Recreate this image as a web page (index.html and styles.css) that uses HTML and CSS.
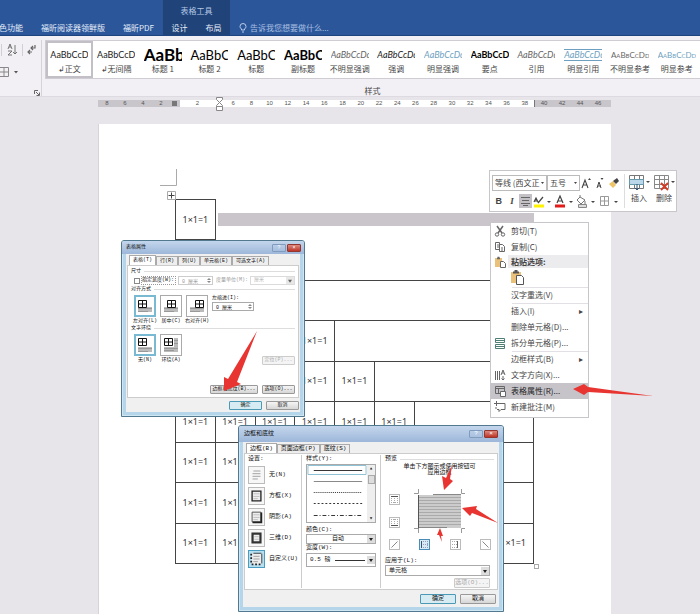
FILE: index.html
```html
<!DOCTYPE html>
<html lang="zh-CN">
<head>
<meta charset="utf-8">
<title>Word</title>
<link rel="stylesheet" href="styles.css">
</head>
<body>
<header class="titlebar">
  <nav class="tabs">
    <a href="#" class="first">色功能</a>
    <a href="#" class="reader">福昕阅读器领鲜版</a>
    <a href="#" class="pdf">福昕PDF</a>
  </nav>
  <div class="context-tabs">
    <span class="context-title">表格工具</span>
    <nav class="context-links"><a href="#">设计</a><a href="#">布局</a></nav>
  </div>
  <div class="tell-me">
    <svg width="8" height="10" viewBox="0 0 8 10" fill="none" stroke="#b9cbe8"><path d="M2.5 7V6Q1 5 1 3.5a3 3 0 0 1 6 0Q7 5 5.500 6v1zM3 9h2"/></svg>
    <span>告诉我您想要做什么...</span>
  </div>
</header>

<section class="ribbon">
  <div class="paragraph-tools">
    <div class="tool-row">
      <svg width="40" height="14" viewBox="0 0 40 14" fill="none" stroke="#666"><path d="M8 6l2-5 2 5M9 4h2M8 8h4l-4 4h4M15 2v9M13 9l2 2 2-2" stroke-width=".9"/><path d="M1.500 1v12M22.500 1v12" stroke="#d2ced6"/><path d="M35 2v3h-4M33 3l-2 2 2 2M28 9h4M30 7l-2 2 2 2" stroke-width="1.200"/></svg>
    </div>
    <div class="tool-row">
      <svg width="20" height="10" viewBox="0 0 20 10" fill="none" stroke="#888"><path d="M0 .5h8.500v9H0M0 5h8M4 0v9"/><path d="M14 4h4l-2 2.500z" fill="#555" stroke="none"/></svg>
    </div>
    <svg class="launcher" width="6" height="6" viewBox="0 0 6 6" fill="none" stroke="#666"><path d="M.5 4V.5H4M2 2l3 3M5.500 2.500v3h-3"/></svg>
  </div>
  <div class="styles-group">
    <div class="gallery">
      <button class="style selected"><span class="sample">AaBbCcDd</span><span>↲正文</span></button>
      <button class="style"><span class="sample">AaBbCcDd</span><span>↲无间隔</span></button>
      <button class="style"><span class="sample huge">AaBbC</span><span>标题 1</span></button>
      <button class="style"><span class="sample large">AaBbCc</span><span>标题 2</span></button>
      <button class="style"><span class="sample large">AaBbCc</span><span>标题</span></button>
      <button class="style"><span class="sample large strong">AaBbCc</span><span>副标题</span></button>
      <button class="style"><span class="sample italic muted">AaBbCcDd</span><span>不明显强调</span></button>
      <button class="style"><span class="sample italic">AaBbCcDd</span><span>强调</span></button>
      <button class="style"><span class="sample italic blue">AaBbCcDd</span><span>明显强调</span></button>
      <button class="style"><span class="sample strong">AaBbCcD</span><span>要点</span></button>
      <button class="style"><span class="sample italic muted">AaBbCcDd</span><span>引用</span></button>
      <button class="style"><span class="sample italic blue ruled">AaBbCcDd</span><span>明显引用</span></button>
      <button class="style"><span class="sample caps muted">AaBbCcDd</span><span>不明显参考</span></button>
      <button class="style"><span class="sample caps blue">AaBbCcDd</span><span>明显参考</span></button>
    </div>
    <div class="group-name">样式</div>
  </div>
</section>

<main class="workspace">
  <div class="ruler">
    <div class="outside left"><i>8</i><i>6</i><i>4</i><i>2</i><b></b></div>
    <div class="inside">
      <i class="wide">2</i>
      <svg class="indent" width="9" height="14" viewBox="0 0 9 14" fill="#fff" stroke="#888"><path d="M1.500.5h6v2l-3 3-3-3zM1.500 9.500v-1l3-3 3 3v1zM1.500 9.500h6v4h-6z"/></svg>
      <i>6</i><i>8</i><i>10</i><i>12</i><i>14</i><i>16</i><i>18</i><i>20</i><i>22</i><i>24</i><i>26</i><i>28</i><i>30</i><i>32</i><i>34</i><i>36</i><i>38</i>
    </div>
    <div class="outside right"><i>40</i><i>42</i><i>44</i><i>46</i></div>
  </div>

  <article class="page">
    <svg class="corner" width="18" height="31" viewBox="0 0 18 31" fill="none" stroke="#aaa"><path d="M0 16.500h16.500V0"/><path d="M7.500 22.500h8v8h-8z" fill="#fff"/><path d="M11.500 23.500v6M8.500 26.500h6" stroke="#444"/></svg>
    <table class="sheet">
      <colgroup><col><col><col><col><col><col><col><col><col></colgroup>
      <tr><td>1×1=1</td><td colspan="8" class="open"><div class="selection"></div></td></tr>
      <tr><td>1×1=1</td><td class="below-open">1×1=1</td><td colspan="7" class="below-open"></td></tr>
      <tr><td>1×1=1</td><td>1×1=1</td><td colspan="7"></td></tr>
      <tr><td>1×1=1</td><td>1×1=1</td><td>1×1=1</td><td>1×1=1</td><td colspan="5"></td></tr>
      <tr><td>1×1=1</td><td>1×1=1</td><td>1×1=1</td><td>1×1=1</td><td>1×1=1</td><td colspan="4"></td></tr>
      <tr><td>1×1=1</td><td>1×1=1</td><td>1×1=1</td><td>1×1=1</td><td>1×1=1</td><td>1×1=1</td><td colspan="3"></td></tr>
      <tr><td>1×1=1</td><td>1×1=1</td><td>1×1=1</td><td>1×1=1</td><td>1×1=1</td><td>1×1=1</td><td>1×1=1</td><td colspan="2"></td></tr>
      <tr><td>1×1=1</td><td>1×1=1</td><td>1×1=1</td><td>1×1=1</td><td>1×1=1</td><td>1×1=1</td><td>1×1=1</td><td colspan="2"></td></tr>
      <tr><td>1×1=1</td><td>1×1=1</td><td>1×1=1</td><td>1×1=1</td><td>1×1=1</td><td>1×1=1</td><td>1×1=1</td><td colspan="2" class="last">1×1=1</td></tr>
    </table>
    <div class="resize-handle"></div>

    <section class="dialog properties">
      <header><span>表格属性</span><button class="help">?</button><button class="close">×</button></header>
      <div class="body">
        <div class="dialog-tabs"><button class="active">表格(T)</button><button>行(R)</button><button>列(U)</button><button>单元格(E)</button><button>可选文字(A)</button></div>
        <div class="panel">
          <h3>尺寸</h3>
          <div class="size-row">
            <input type="checkbox" id="set-width"><label for="set-width" class="focus">指定宽度(W):</label>
            <input type="text" value="0 厘米" disabled aria-label="宽度" class="amount">
            <label for="unit" class="off">度量单位(M):</label>
            <select id="unit" disabled><option>厘米</option></select>
          </div>
          <h3>对齐方式</h3>
          <div class="choice-row">
            <button class="choice"><span class="tile on"><svg width="16" height="16" viewBox="0 0 16 16"><path d="M1 9h14v5H1z" fill="#bbb"/><path d="M1 10.500h14M1 13.500h10" stroke="#999"/><path d="M1.500 2.500h8v7h-8zM5.500 2v8M1 6h9" fill="#fff" stroke="#111"/></svg></span>左对齐(L)</button>
            <button class="choice"><span class="tile"><svg width="16" height="16" viewBox="0 0 16 16"><path d="M1 9h14v5H1z" fill="#bbb"/><path d="M1 10.500h14M1 13.500h10" stroke="#999"/><path d="M4.500 2.500h8v7h-8zM8.500 2v8M4 6h9" fill="#fff" stroke="#111"/></svg></span>居中(C)</button>
            <button class="choice"><span class="tile"><svg width="16" height="16" viewBox="0 0 16 16"><path d="M1 9h14v5H1z" fill="#bbb"/><path d="M1 10.500h14M1 13.500h10" stroke="#999"/><path d="M6.500 2.500h8v7h-8zM10.500 2v8M6 6h9" fill="#fff" stroke="#111"/></svg></span>右对齐(H)</button>
            <div class="indent-field"><label for="left-indent">左缩进(I):</label><input id="left-indent" type="text" value="0 厘米" class="amount"></div>
          </div>
          <h3>文字环绕</h3>
          <div class="choice-row">
            <button class="choice"><span class="tile on"><svg width="16" height="16" viewBox="0 0 16 16"><path d="M1 10h14v5H1z" fill="#bbb"/><path d="M1 11.500h14M1 14.500h10" stroke="#999"/><path d="M1.500 1.500h8v7h-8zM5.500 1v8M1 5h9" fill="#fff" stroke="#111"/></svg></span>无(N)</button>
            <button class="choice"><span class="tile"><svg width="16" height="16" viewBox="0 0 16 16"><path d="M11 1h4v14H1v-5h10z" fill="#bbb"/><path d="M1 11.500h14M1 13.500h10M11 3.500h4M11 6.500h4" stroke="#999"/><path d="M1.500 1.500h8v7h-8zM5.500 1v8M1 5h9" fill="#fff" stroke="#111"/></svg></span>环绕(A)</button>
            <button class="push" disabled>定位(P)...</button>
          </div>
          <div class="panel-actions"><button class="push broad">边框和底纹(B)...</button><button class="push">选项(O)...</button></div>
        </div>
        <footer><button class="push default">确定</button><button class="push">取消</button></footer>
      </div>
    </section>

    <section class="dialog borders">
      <header><span>边框和底纹</span><button class="help">?</button><button class="close">×</button></header>
      <div class="body">
        <div class="dialog-tabs"><button class="active">边框(B)</button><button>页面边框(P)</button><button>底纹(S)</button></div>
        <div class="panel columns">
          <div class="settings">
            <p>设置:</p>
            <button><svg width="17" height="18" viewBox="0 0 17 18"><path d="M5 4.500h8M4 7.500h9M4 10.500h9M4 13.500h6" stroke="#999"/></svg>无(N)</button>
            <button><svg width="17" height="18" viewBox="0 0 17 18"><path d="M3.500 3.500h10v11h-10z" fill="#eee" stroke="#222" stroke-width="1.500"/><path d="M5 6.500h7M5 9.500h7M5 12h5" stroke="#bbb"/></svg>方框(X)</button>
            <button><svg width="17" height="18" viewBox="0 0 17 18"><path d="M3.500 3.500h10v11h-10z" fill="#eee" stroke="#444"/><path d="M14 4v11H4" fill="none" stroke="#222" stroke-width="2"/><path d="M5 6.500h7M5 9.500h7M5 12h5" stroke="#bbb"/></svg>阴影(A)</button>
            <button><svg width="17" height="18" viewBox="0 0 17 18"><path d="M4 4h9v10H4z" fill="#eee" stroke="#333" stroke-width="2.500"/><path d="M6 7.500h5M6 10.500h5" stroke="#bbb"/></svg>三维(D)</button>
            <button><svg class="on" width="17" height="18" viewBox="0 0 17 18"><path d="M3 3h11v12H3z" fill="#eee"/><path d="M2.500 3v11M3 15h12" stroke="#222" stroke-width="2" stroke-dasharray="2"/><path d="M5 2.500h9M14.500 3v11" stroke="#333"/><path d="M5 6h7M5 9h7M5 12h5" stroke="#999"/></svg>自定义(U)</button>
          </div>
          <div class="line-options">
            <p>样式(Y):</p>
            <div class="line-list">
              <svg viewBox="0 0 62 57" preserveAspectRatio="none" fill="none" stroke="#333"><path d="M1 .5h60v9H1z" stroke="#8dc1d4"/><path d="M7 5.500h50"/><path d="M7 16.500h50" stroke="#888"/><path d="M7 27.500h50" stroke-dasharray="1"/><path d="M7 38.500h50" stroke-dasharray="2"/><path d="M7 50.500h50" stroke-dasharray="4 2 1 2"/></svg>
              <div class="scroll"><span>▴</span><em></em><span>▾</span></div>
            </div>
            <label for="color">颜色(C):</label>
            <select id="color" class="centered"><option>自动</option></select>
            <label for="width">宽度(W):</label>
            <div class="weight"><select id="width"><option>0.5 磅</option></select></div>
          </div>
          <div class="preview">
            <h3>预览</h3>
            <p class="hint">单击下方图示或使用按钮可<br>应用边框</p>
            <div class="preview-grid">
              <div class="side"><button class="edge" aria-label="上边框"><svg width="9" height="9" viewBox="0 0 9 9"><path d="M1 1.500h7" stroke="#555"/><path d="M1.500 3v5M7.500 3v5M4.500 3v5M1 7.500h7" stroke="#aaa" stroke-dasharray="1"/></svg></button><button class="edge" aria-label="下边框"><svg width="9" height="9" viewBox="0 0 9 9"><path d="M1 7.500h7" stroke="#555"/><path d="M1.500 1v5M7.500 1v5M4.500 1v5M1 1.500h7" stroke="#aaa" stroke-dasharray="1"/></svg></button></div>
              <svg class="sample-page" width="52" height="46" viewBox="0 0 52 46" fill="none"><path d="M6 6h42v33H6z" fill="#ccc"/><path d="M6 8.500h42M6 11.500h42M6 14.500h42M6 17.500h42M6 20.500h42M6 23.500h42M6 26.500h42M6 29.500h42M6 32.500h42M6 35.500h42" stroke="#aaa"/><path d="M5.500 6v34" stroke="#555"/><path d="M20 5.500h28M6 38.500h28" stroke="#888"/><path d="M1 4.500h4.500V0M53 4.500h-4.500V0M1 39.500h4.500V44M53 39.500h-4.500V44" stroke="#999"/></svg>
            </div>
            <div class="edges"><button class="edge" aria-label="斜线"><svg width="9" height="9" viewBox="0 0 9 9"><path d="M1.500 7.500l6-6" stroke="#888"/></svg></button><button class="edge on" aria-label="左边框"><svg width="9" height="9" viewBox="0 0 9 9"><path d="M1.500 1v7" stroke="#357"/><path d="M3 1.500h5M3 4.500h5M3 7.500h5M7.500 1v7" stroke="#99b" stroke-dasharray="1"/></svg></button><button class="edge" aria-label="右边框"><svg width="9" height="9" viewBox="0 0 9 9"><path d="M6.500 1v7" stroke="#666"/><path d="M1 1.500h5M1 4.500h5M1 7.500h5" stroke="#aaa" stroke-dasharray="1"/></svg></button><button class="edge" aria-label="反斜线"><svg width="9" height="9" viewBox="0 0 9 9"><path d="M1.500 1.500l6 6" stroke="#888"/></svg></button></div>
            <label for="apply">应用于(L):</label>
            <select id="apply"><option>单元格</option></select>
            <button class="push" disabled>选项(O)...</button>
          </div>
        </div>
        <footer><button class="push default">确定</button><button class="push">取消</button></footer>
      </div>
    </section>

    <div class="mini-toolbar">
      <div class="mini-main">
        <div class="mini-row">
          <select aria-label="字体" class="font-name"><option>等线 (西文正</option></select><select aria-label="字号" class="font-size"><option>五号</option></select>
          <svg width="42" height="14" viewBox="0 0 42 14" fill="none" stroke="#444"><path d="M2 12l3-8 3 8M3 9h4" stroke-width="1.100"/><path d="M8 4l1.500-2L11 4z" fill="#444" stroke="none"/><path d="M17 12l2-6 2 6M18 10h3"/><path d="M20.500 2h3L22 4z" fill="#444" stroke="none"/><path d="M29 8l4-3 3 4-3 3z" fill="#efc568" stroke="none"/><path d="M33 5l4-3 2 3-3 3z" fill="#444" stroke="none"/></svg>
        </div>
        <div class="mini-row">
          <button class="glyph bold">B</button><button class="glyph italic">I</button>
          <button class="glyph pressed" aria-label="居中"><svg width="13" height="14" viewBox="0 0 13 14" stroke="#666"><path d="M2 3.500h9M3 6.500h7M2 9.500h9M4 11.500h5"/></svg></button>
          <svg width="92" height="14" viewBox="0 0 92 14" fill="none" stroke="#444"><path d="M2 10.500h10v3H2z" fill="#fff200" stroke="none"/><path d="M2 8l2-4 2 4M3 7h2M6 9l5-6" stroke-width="1.200"/><path d="M25 9l3-7 3 7M26 7h4" stroke-width="1.200"/><path d="M23 10.500h10v3H23z" fill="#e21b1b" stroke="none"/><path d="M48 3l5 3-4 4-4-4zM48 3V1M53 7v3" stroke="#777"/><path d="M46.500 10.500h8v3h-8z" fill="#ddd" stroke="#888"/><path d="M68.500 2.500h8v9h-8zM72.500 2v10M68 7h9" stroke="#999"/><path d="M15 7h4l-2 2zM37 7h4l-2 2zM59 7h4l-2 2zM82 7h4l-2 2z" fill="#444" stroke="none"/></svg>
        </div>
      </div>
      <button class="big"><svg width="22" height="18" viewBox="0 0 22 18" fill="none" stroke="#777"><path d="M1.500 1.500h14v13h-14zM6.500 1v5M11.500 1v5M6.500 11v4M11.500 11v4"/><path d="M1.500 5.500h14v5h-14z" fill="#bcd6ea" stroke="#69a"/><path d="M9 10v6M7 14l2 2 2-2" stroke="#357"/><path d="M18 7h4l-2 2z" fill="#444" stroke="none"/></svg>插入</button>
      <button class="big"><svg width="22" height="18" viewBox="0 0 22 18" fill="none" stroke="#888"><path d="M1.500 1.500h14v13h-14zM6.500 1v14M11.500 1v14M1 5.500h15M1 10.500h15"/><path d="M8 9l7 7M15 9l-7 7" stroke="#d33d25" stroke-width="1.800"/><path d="M18 7h4l-2 2z" fill="#444" stroke="none"/></svg>删除</button>
    </div>

    <div class="menu">
      <button><svg viewBox="0 0 12 12"><path d="M3 1l5 7M9 1L4 8" stroke-width="1.500"/><circle cx="3" cy="9.500" r="1.700"/><circle cx="9" cy="9.500" r="1.700"/></svg>剪切(T)</button>
      <button><svg viewBox="0 0 12 12"><path d="M1.500 1.500h4v7h-4zM3 4h2M3 6h2"/><path d="M5.500 3.500h3l2 2v5h-5zM7 7h2M7 9h2" fill="#fff"/></svg>复制(C)</button>
      <div class="menu-heading"><svg viewBox="0 0 12 12"><path d="M1 2h7v9H1z" fill="#e9c17a" stroke="none"/><path d="M3 2.500h3M3.500 1.500h2" stroke-width="1.500"/><path d="M6.500 5.500h3l2 2v4h-5z" fill="#fff"/></svg><b>粘贴选项:</b></div>
      <div class="paste-row"><button aria-label="保留源格式"><svg class="paste" width="15" height="17" viewBox="0 0 15 17" fill="none" stroke="#555"><path d="M1 3h10v11H1z" fill="#e9c17a" stroke="none"/><path d="M3 3.500h6M4.500 2h3" stroke-width="2"/><path d="M6.500 6.500h5l2 2v7h-7z" fill="#fff"/></svg></button></div>
      <button class="ruled-top"><svg></svg>汉字重选(V)</button>
      <button class="ruled-top"><svg></svg>插入(I)<em>▸</em></button>
      <button><svg></svg>删除单元格(D)...</button>
      <button><svg viewBox="0 0 12 12" class="green"><path d="M1.500 1.500h9v4h-9zM1.500 7.500h9v4h-9zM1.500 3.500h9M1.500 9.500h9"/></svg>拆分单元格(P)...</button>
      <button class="ruled-top"><svg></svg>边框样式(B)<em>▸</em></button>
      <button><svg viewBox="0 0 12 12"><path d="M1.500 2v9M3.500 2v9M5.500 2v9M7 6l2-5 2 5M8 4h2M9 7v4M7.500 9.500L9 11l1.500-1.500"/></svg>文字方向(X)...</button>
      <button class="highlight"><svg viewBox="0 0 12 12"><path d="M1.500 1.500h9v7h-9zM1 3.500h10M4.500 4v5"/><path d="M6.500 6.500h5v5h-5z" fill="#fff"/></svg>表格属性(R)...</button>
      <button><svg viewBox="0 0 12 12"><path d="M4 2.500h7v6H7l-2 2v-2H3M2.500 0v5M0 2.500h5M2 6v2"/></svg>新建批注(M)</button>
    </div>

    <svg class="arrows" width="602" height="490" viewBox="98 124 602 490" fill="#e83531">
      <path d="M257 331L237 382L241 384L224 391L224 377L228 379Z"/>
      <path d="M653 396L588 392L584 395L573 389L584 384L588 387Z"/>
      <path d="M452 465L450 479L453 481L444 490L442 476L446 478Z"/>
      <path d="M498 523L472 513L470 516L462 508L477 506L476 509Z"/>
      <path d="M442 542L441 536L443 536L440 528L437 535L439 535Z"/>
    </svg>
  </article>
</main>
</body>
</html>
```
FILE: styles.css
```css
* { box-sizing: border-box; }
body {
  margin: 0;
  height: 100vh;
  display: flex;
  flex-direction: column;
  overflow: hidden;
  background: #e7e4ea;
  color: #444;
  font: 8px/10px "Noto Sans CJK SC", sans-serif;
}
button, input, select { font: inherit; color: inherit; margin: 0; padding: 0; border: 0; background: none; border-radius: 0; appearance: none; }
p, h3 { margin: 0; font-weight: 400; font-size: inherit; }
svg { flex: none; }
a { color: inherit; text-decoration: none; white-space: nowrap; }
i, em { font-style: normal; }

/* Title bar */
.titlebar { display: flex; height: 36px; background: #2b579a; color: #e8eefa; border-bottom: 1px solid #1e4480; flex: none; }
.tabs { display: flex; width: 163px; padding-top: 23px; gap: 18px; }
.tabs .first { margin-left: -1px; }
.context-tabs { width: 67px; background: #204379; padding-top: 6px; display: flex; flex-direction: column; gap: 7px; align-items: center; }
.context-title { color: #b5c7e6; }
.context-links { display: flex; gap: 18px; }
.tell-me { display: flex; gap: 3px; padding: 23px 0 0 9px; color: #a9bfe2; white-space: nowrap; }

/* Ribbon */
.ribbon { display: flex; height: 61px; flex: none; background: #f3f0f5; border-bottom: 1px solid #dedae1; padding-top: 4px; }
.paragraph-tools { width: 42px; border-right: 1px solid #d6d2da; display: flex; flex-direction: column; }
.tool-row { height: 24px; padding-top: 3px; }
.launcher { margin: 2px 0 0 34px; }
.styles-group { flex: 1; min-width: 0; padding-left: 3px; }
.gallery { display: grid; grid-template-columns: repeat(14, minmax(0, 1fr)); height: 39px; background: #fff; border: 1px solid #d0ccd4; border-right: 0; }
.style { display: flex; flex-direction: column; align-items: center; white-space: nowrap; padding: 3px 2px 0; border: 2px solid transparent; overflow: hidden; }
.style.selected { border-color: #c2bfc6; }
.sample { width: 38px; height: 18px; line-height: 18px; font-family: Lato, sans-serif; font-size: 9px; overflow: hidden; text-align: left; color: #222; flex: none; }
.sample.large { font-size: 13px; color: #000; }
.sample.huge { font-size: 17px; font-weight: 700; color: #000; }
.sample.strong { font-weight: 700; color: #000; }
.sample.italic { font-style: italic; }
.sample.muted { color: #666; }
.sample.blue { color: #6f9fc0; }
.sample.ruled { height: 12px; line-height: 10px; margin: 3px 0; border: solid #6f9fc0; border-width: 1px 0; }
.sample.caps { font-variant: small-caps; font-size: 8px; }
.group-name { text-align: center; padding: 7px 0 0; width: 655px; max-width: 100%; }

/* Ruler */
.workspace { flex: 1; min-height: 0; display: flex; flex-direction: column; padding: 3px 89px 0 98px; overflow: hidden; }
.ruler { display: flex; height: 24px; flex: none; font: 6px/7px "Liberation Sans", sans-serif; color: #555; text-align: center; }
.ruler > div { display: flex; height: 7px; }
.ruler i { flex: 1; min-width: 0; }
.ruler .outside { background: #c8c5cb; }
.ruler .outside i { flex: 0 0 18px; }
.ruler .left { width: 82px; }
.ruler .left b { width: 5px; height: 5px; margin: 1px 2px; background: #777; }
.ruler .right { width: 77px; border-left: 1px solid #777; }
.ruler .inside { flex: 1; background: #fff; }
.ruler .inside .wide { flex: 0 0 35px; }
.indent { margin-top: -3px; }

/* Page */
.page { position: relative; flex: 1; background: #fff; padding: 45px 77px 0 61px; border-left: 1px solid #d6d3d9; }
.corner { display: block; }
.sheet { width: calc(100% - 15px); height: 365px; margin: -1px 0 0 15px; border-collapse: collapse; table-layout: fixed; font: 9px/12px "Noto Sans", sans-serif; color: #333; }
.sheet td { border: 1px solid #444; padding: 0; text-align: center; }
.sheet .open { border: 0; border-left: 1px solid #444; }
.sheet .below-open { border-top: 0; }
.sheet .last { text-align: right; padding-right: 7px; }
.selection { height: 13px; margin-left: 2px; background: #c9c5cb; }
.resize-handle { width: 5px; height: 5px; border: 1px solid #aaa; margin-left: auto; margin-right: -5px; }
.arrows { position: absolute; left: -1px; top: 0; pointer-events: none; }

/* Dialogs */
.dialog { position: absolute; display: flex; flex-direction: column; padding: 0 4px 4px; color: #111; background: #b4d5ea; border: 1px solid #51798f; border-radius: 3px 3px 0 0; box-shadow: inset 0 0 0 1px #cfe6f3; white-space: nowrap; font-family: "Liberation Mono", "Noto Sans CJK SC", monospace; }
.properties { left: 22px; top: 116px; width: 184px; height: 177px; font-size: 5px; line-height: 7px; }
.borders { left: 139px; top: 301px; width: 266px; height: 187px; font-size: 6px; line-height: 8px; }
.dialog header { display: flex; align-items: center; height: 13px; margin: 0 -4px; padding: 0 3px 0 4px; gap: 1px; background: linear-gradient(#c4d6ec, #9db7da); border-radius: 2px 2px 0 0; flex: none; }
.borders header { height: 16px; padding: 0 5px; }
.dialog header span { flex: 1; }
.dialog header button { width: 14px; height: 8px; line-height: 6px; border: 1px solid #7f9bbd; border-radius: 1px; color: #fff; }
.dialog header .close { background: linear-gradient(#dc8a80, #bd3427); border-color: #94362f; }
.body { flex: 1; display: flex; flex-direction: column; background: #f0f0f0; padding: 1px 1px 0; min-height: 0; }
.dialog-tabs { display: flex; padding-left: 2px; height: 10px; flex: none; }
.dialog-tabs button { border: 1px solid #aaa; border-bottom: 0; background: #eee; padding: 0 3px; margin-top: 1px; }
.dialog-tabs .active { background: #fff; margin-top: 0; }
.panel { flex: 1; background: #fff; border: 1px solid #ccc; padding: 2px 3px; min-height: 0; }
.body footer { display: flex; justify-content: flex-end; align-items: center; gap: 4px; height: 14px; flex: none; }
.borders footer { height: 17px; padding-right: 2px; }
.push { width: 33px; height: 9px; line-height: 7px; border: 1px solid #999; border-radius: 1px; background: linear-gradient(#f5f5f5, #d6d6d6); }
.push.default { border-color: #4c99b5; background: #d7ebf3; }
.push:disabled { color: #aaa; background: #f4f4f4; border-color: #ccc; }
.push.broad { width: 48px; }
.borders .push { width: 36px; height: 10px; line-height: 8px; }
h3 { display: flex; align-items: center; gap: 3px; }
h3::after { content: ""; flex: 1; border-top: 1px solid #ddd; }
.dialog select, .amount { border: 1px solid #aaa; background: #fff; padding-left: 3px; }
.dialog select:disabled, .amount:disabled { color: #999; border-color: #ccc; }
.dialog select { background: #fff url("data:image/svg+xml,%3Csvg xmlns='http://www.w3.org/2000/svg' width='8' height='8'%3E%3Cpath d='M0 0h8v8H0z' fill='%23ddd'/%3E%3Cpath d='M2 3h4L4 6z' fill='%23222'/%3E%3C/svg%3E") no-repeat right center; }
.dialog .amount { width: 35px; height: 9px; background: #fff url("data:image/svg+xml,%3Csvg xmlns='http://www.w3.org/2000/svg' width='6' height='7'%3E%3Cpath d='M1 3l2-2 2 2zM1 4l2 2 2-2z' fill='%23888'/%3E%3C/svg%3E") no-repeat right center; }
.size-row { display: flex; align-items: center; height: 11px; padding-left: 3px; }
.size-row input[type="checkbox"] { width: 6px; height: 6px; border: 1px solid #888; }
.size-row .focus { width: 34px; outline: 1px dotted #999; margin: 0 3px 0 2px; line-height: 7px; }
.size-row .off { color: #999; margin-left: 3px; width: 35px; }
.size-row select { width: 46px; height: 9px; }
.choice-row { display: flex; align-items: flex-start; gap: 4px; padding: 2px 0 1px 3px; height: 32px; }
.choice { width: 22px; display: flex; flex-direction: column; align-items: center; gap: 1px; }
.tile { width: 22px; height: 22px; border: 1px solid #aaa; display: grid; place-items: center; background: #fff; flex: none; }
.tile.on { border: 2px solid #79b9d1; }
.indent-field { display: flex; flex-direction: column; }
.dialog .indent-field .amount { width: 42px; }
.choice-row .push { margin: 22px 0 0 auto; }
.panel-actions { display: flex; justify-content: flex-end; gap: 4px; padding-top: 21px; }

.columns { display: grid; grid-template-columns: 53px 80px 1fr; padding: 1px 3px; }
.columns > div { display: flex; flex-direction: column; min-width: 0; }
.settings p { height: 9px; }
.settings button { display: flex; align-items: center; gap: 4px; height: 21px; text-align: left; }
.settings svg { border: 1px solid #bbb; background: #f7f7f7; }
.settings svg.on { border-color: #4a9cc0; background: #b8dff0; }
.line-options { border: solid #ccc; border-width: 0 1px; padding: 0 4px; }
.line-list { display: flex; height: 59px; border: 1px solid #aaa; margin: 1px 0 3px; }
.line-list > svg { flex: 1; min-width: 0; height: 57px; }
.scroll { width: 8px; background: #eee; display: flex; flex-direction: column; justify-content: space-between; align-items: center; line-height: 7px; }
.scroll em { width: 7px; height: 9px; border: 1px solid #aaa; background: #ddd; margin-bottom: 28px; }
.line-options label { height: 8px; }
.dialog .centered { height: 10px; padding-left: 25px; }
.weight { display: grid; margin-top: 1px; }
.weight select { grid-area: 1 / 1; height: 14px; }
.weight::after { content: ""; grid-area: 1 / 1; align-self: center; width: 30px; margin-left: 29px; border-top: 1px solid #333; }
.preview { padding-left: 4px; }
.hint { text-align: center; line-height: 6px; padding-top: 1px; }
.preview-grid { display: flex; gap: 13px; padding: 13px 0 0 4px; }
.side { display: flex; flex-direction: column; gap: 12px; padding-top: 5px; }
.edge { width: 11px; height: 11px; border: 1px solid #bbb; display: grid; place-items: center; }
.edge.on { border-color: #4a8cb8; background: #d5eaf5; }
.edges { display: flex; justify-content: space-between; padding: 4px 3px 7px 4px; }
.preview label { height: 8px; }
.preview select { height: 11px; margin-right: 4px; }
.preview .push { align-self: flex-end; margin: 2px 4px 0 0; }

/* Floating toolbar */
.mini-toolbar { position: absolute; left: 390px; top: 46px; width: 188px; height: 42px; display: flex; background: #fff; border: 1px solid #c8c5cb; padding: 3px 2px; white-space: nowrap; }
.mini-main { width: 133px; border-right: 1px solid #ddd; }
.mini-row { display: flex; align-items: center; height: 18px; }
.mini-row select { height: 16px; border: 1px solid #bbb; padding-left: 2px; background: url("data:image/svg+xml,%3Csvg xmlns='http://www.w3.org/2000/svg' width='6' height='4'%3E%3Cpath d='M1 1h3L2.500 3z' fill='%23444'/%3E%3C/svg%3E") no-repeat right center; }
.font-name { width: 55px; }
.font-size { width: 33px; }
.glyph { width: 14px; height: 14px; font: 9px/14px "Liberation Sans", sans-serif; }
.glyph.bold { font-weight: 700; }
.glyph.italic { font-family: "Liberation Serif", serif; font-style: italic; font-weight: 700; }
.glyph.pressed { background: #c3c0c6; }
.big { width: 25px; display: flex; flex-direction: column; align-items: center; gap: 1px; padding-left: 3px; }

/* Context menu */
.menu { position: absolute; left: 391px; top: 98px; width: 99px; display: flex; flex-direction: column; background: #fff; border: 1px solid #c8c5cb; padding-bottom: 2px; white-space: nowrap; }
.menu > button, .menu-heading { display: flex; align-items: center; height: 16px; text-align: left; padding-left: 3px; gap: 5px; }
.menu svg:not(.paste) { width: 12px; height: 12px; fill: none; stroke: #666; }
.menu svg.green { stroke: #4f7f72; }
.menu .menu-heading { height: 13px; background: linear-gradient(90deg, #fff 17px, #ecebed 17px); }
.menu em { margin: 0 5px 0 auto; }
.paste-row { height: 19px; padding: 1px 0 0 19px; }
.menu .ruled-top { background: linear-gradient(#e2e0e4, #e2e0e4) no-repeat 21px 0 / 100% 1px; }
.menu .highlight { background: #c6c3c9; color: #222; }
```
